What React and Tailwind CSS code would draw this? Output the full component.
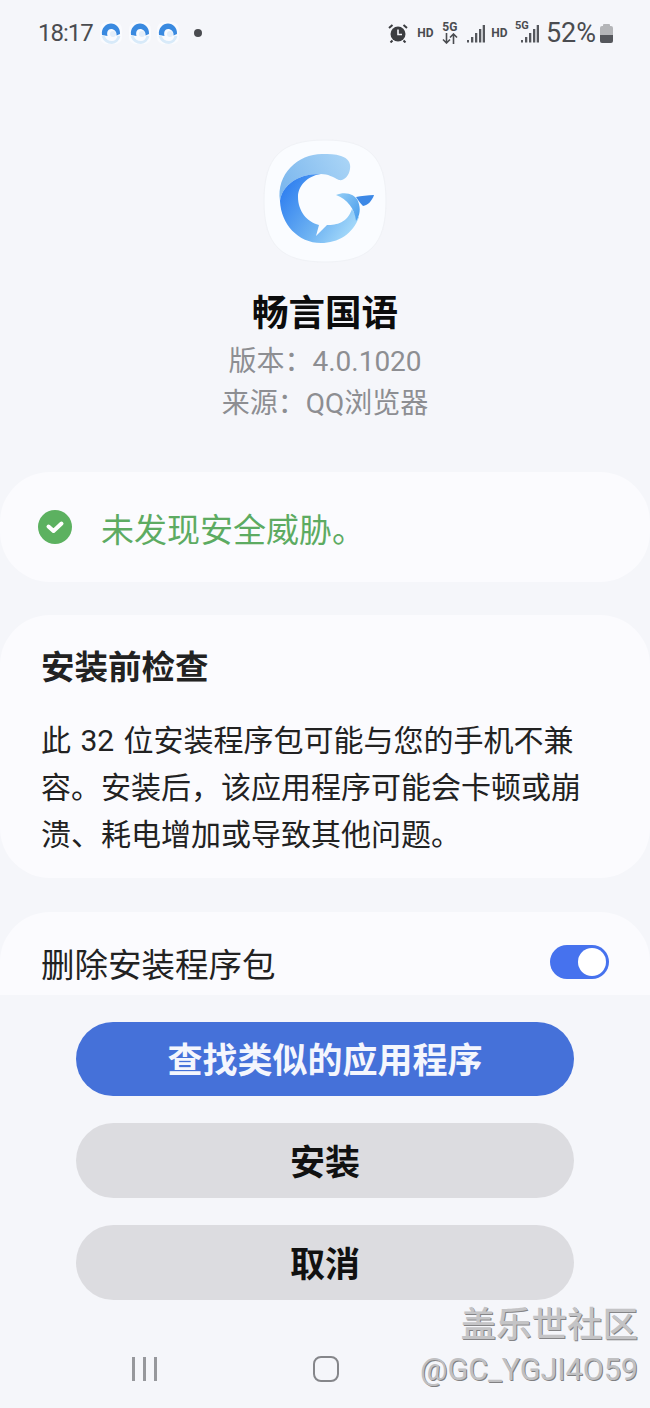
import React from 'react';

const FONT = "font-['Roboto','Noto_Sans_CJK_SC',sans-serif]";

const MiniApp = () => (
  <svg width="24" height="26" viewBox="0 0 24 26" className="shrink-0">
    <rect x="1" y="2" width="22" height="22" rx="7" fill="#fafbfe" />
    <path d="M3 15C2 8 7 3.500 12 3.500C17 3.500 21.500 8 21 14L17.500 15.500C18 11.500 15 9 12 9C9 9 7.500 12 8.500 16Z" fill="#3a8ae0" />
    <path d="M4 16C6 21 10 22.500 13 22.500C16 22.500 19 20 20 16" stroke="#d8eaf9" strokeWidth="3" fill="none" />
    <circle cx="14" cy="14" r="3" fill="#e3eefa" />
  </svg>
);

const Signal = ({ dot = true }) => (
  <svg width="18" height="18" viewBox="0 0 18 18" fill="#55575c">
    {dot && <rect x="0" y="15" width="2" height="2.500" />}
    <rect x="4" y="12" width="2.300" height="5.500" />
    <rect x="8" y="8" width="2.300" height="9.500" />
    <rect x="12" y="4" width="2.300" height="13.500" />
    <rect x="15.700" y="0" width="2.300" height="17.500" />
  </svg>
);

const StatusBar = () => (
  <div className="h-[66px] flex items-center pl-[38px] pr-[37px] text-[#4a4c50] shrink-0">
    <span className="text-[24px] w-[54px] tracking-[-1px] leading-none">18:17</span>
    <div className="flex items-center gap-[4.500px] ml-[7px]">
      <MiniApp />
      <MiniApp />
      <MiniApp />
    </div>
    <div className="w-[8px] h-[8px] rounded-full bg-[#4a4c50] ml-[14px]"></div>

    <div className="ml-auto flex items-center">
      <svg width="20" height="20" viewBox="0 0 20 20">
        <circle cx="10" cy="11" r="7.500" fill="#3b3d40" />
        <path d="M10 6.500V11.500H14" stroke="#f5f6fa" strokeWidth="1.600" fill="none" />
        <path d="M1 5l3.500-3M19 5l-3.500-3M4.500 17.500l-2 2M15.500 17.500l2 2" stroke="#3b3d40" strokeWidth="2" />
      </svg>
      <span className="text-[12px] font-bold w-[17px] text-center ml-[9px]">HD</span>
      <div className="flex flex-col items-center w-[16px] leading-none ml-[8px]">
        <span className="text-[12px] font-bold leading-[10px]">5G</span>
        <svg width="16" height="11" viewBox="0 0 16 11" fill="none" stroke="#4a4c50" strokeWidth="1.600" className="mt-[1px]">
          <path d="M4.500 0v10M1 6.500l3.500 3.500 3.500-3.500M11.500 11V1M8 4.500L11.500 1 15 4.500" />
        </svg>
      </div>
      <div className="ml-[9px] mt-[2px]">
        <Signal />
      </div>
      <span className="text-[12px] font-bold w-[17px] text-center ml-[6px]">HD</span>
      <div className="relative w-[24px] h-[22px] ml-[7px]">
        <span className="absolute left-0 -top-[2px] text-[11px] font-bold leading-[11px]">5G</span>
        <div className="absolute right-0 top-[3px]">
          <Signal />
        </div>
      </div>
      <span className="text-[27px] leading-none ml-[7px]">52%</span>
      <div className="ml-[4px] w-[13px] h-[19px] flex flex-col items-center">
        <div className="w-[7px] h-[2px] bg-[#b4b5b8] rounded-t-[1px]"></div>
        <div className="w-[13px] h-[17px] rounded-[2px] overflow-hidden flex flex-col">
          <div className="h-[9px] bg-[#b4b5b8]"></div>
          <div className="flex-1 bg-[#55575c]"></div>
        </div>
      </div>
    </div>
  </div>
);

const AppLogo = () => (
  <svg width="124" height="124" viewBox="0 0 124 124">
    <defs>
      <linearGradient id="band" x1="0" y1="0.6" x2="1" y2="0.2">
        <stop offset="0" stopColor="#7db8ee" />
        <stop offset="1" stopColor="#a9d4f6" />
      </linearGradient>
      <linearGradient id="crescent" x1="0" y1="0.25" x2="1" y2="0.85">
        <stop offset="0" stopColor="#2f7ff0" />
        <stop offset="0.55" stopColor="#6db2f2" />
        <stop offset="1" stopColor="#aee0fb" />
      </linearGradient>
      <linearGradient id="fish" x1="0" y1="0" x2="1" y2="0.8">
        <stop offset="0" stopColor="#96cff6" />
        <stop offset="1" stopColor="#4d9fec" />
      </linearGradient>
    </defs>
    <path
      d="M62 1C106 1 123 18 123 62C123 106 106 123 62 123C18 123 1 106 1 62C1 18 18 1 62 1Z"
      fill="#fafcff"
      stroke="#f0f2f6"
    />
    <path
      d="M17 62C13 35 35 15 59 15C66 15 72 15 78 17C85 19 88 24 87 30C86 37 81 42 76 41C70 38 65 35 58 35C36 34 19 46 17 62Z"
      fill="url(#band)"
    />
    <path
      d="M17 62C19 46 36 34 58 35C44 37 35 47 35 58C35 72 44 83 56 86L53 97L64 86C74 86 84 84 89 70C91 74 94 78 96 78C90 95 75 104 58 104C35 104 18 85 17 62Z"
      fill="url(#crescent)"
    />
    <path d="M73 56C82 52 92 55 95 62C98 70 97 76 93 82C92 70 84 60 73 56Z" fill="url(#fish)" />
    <path d="M93 58C98 57 105 56 111 56C109 62 105 66 100 67C97 64 95 61 93 58Z" fill="#3c88e6" />
  </svg>
);

const ActionButton = ({ children, primary }) => (
  <button
    className={
      primary
        ? 'h-[74px] w-full rounded-full bg-[#4571d9] text-[#f4f6fd] text-[35px] font-bold pt-[7px]'
        : 'h-[75px] w-full rounded-full bg-[#dcdce0] text-[#111] text-[35px] font-bold pt-[8px]'
    }
  >
    {children}
  </button>
);

const App = () => {
  return (
    <div className={`${FONT} relative h-[1408px] overflow-hidden bg-[#f5f6fa] flex flex-col`}>
      <div className="h-[995px] overflow-hidden shrink-0">
        <StatusBar />

        <div className="flex flex-col items-center pt-[73px]">
          <AppLogo />
          <div className="mt-[26px] text-[36.500px] font-bold leading-[50px] text-[#0c0c0c]">畅言国语</div>
          <div className="mt-[2px] text-[28px] leading-[42px] text-[#8d8e92]">版本：4.0.1020</div>
          <div className="text-[28px] leading-[42px] text-[#8d8e92]">来源：QQ浏览器</div>
        </div>

        <div className="mt-[47px] h-[110px] rounded-[50px] bg-[#fbfbfe] flex items-center pl-[38px]">
          <svg width="34" height="34" viewBox="0 0 34 34">
            <circle cx="17" cy="17" r="17" fill="#5cb160" />
            <path d="M10.500 16.500L15.500 21L23.500 13.500" stroke="#fff" strokeWidth="4" fill="none" strokeLinecap="round" strokeLinejoin="round" />
          </svg>
          <span className="ml-[29px] text-[33px] text-[#5dab62] pt-[7px]">未发现安全威胁。</span>
        </div>

        <div className="mt-[33px] h-[263px] rounded-[50px] bg-[#fbfbfe] pl-[41px] pr-[42px] pt-[31px]">
          <div className="text-[33.500px] font-bold leading-[44px] text-[#222]">安装前检查</div>
          <div className="mt-[27px] text-[30px] leading-[47px] text-[#222] [word-spacing:2px]">
            此 32 位安装程序包可能与您的手机不兼容。安装后，该应用程序可能会卡顿或崩溃、耗电增加或导致其他问题。
          </div>
        </div>

        <div className="mt-[34px] h-[140px] rounded-[50px] bg-[#fbfbfe] pl-[41px] pr-[41px] pt-[33px] flex justify-between items-start">
          <span className="text-[33.500px] leading-[42px] text-[#222]">删除安装程序包</span>
          <div className="w-[59px] h-[34px] rounded-full bg-[#4672ee] flex items-center justify-end pr-[3px]">
            <div className="w-[28px] h-[28px] rounded-full bg-white"></div>
          </div>
        </div>
      </div>

      <div className="flex-1 bg-[#f5f6fa] flex flex-col">
        <div className="px-[76px] pt-[27px] flex flex-col gap-[27px]">
          <ActionButton primary>查找类似的应用程序</ActionButton>
          <ActionButton>安装</ActionButton>
          <ActionButton>取消</ActionButton>
        </div>

        <div className="mt-[56px] flex items-center">
          <div className="ml-[132px] w-[25px] h-[24px] flex justify-between">
            <div className="w-[3px] h-full bg-[#97989c]"></div>
            <div className="w-[3px] h-full bg-[#97989c]"></div>
            <div className="w-[3px] h-full bg-[#97989c]"></div>
          </div>
          <div className="ml-[156px] w-[26px] h-[26px] rounded-[8px] border-2 border-[#85868a]"></div>
        </div>
      </div>

      {/* watermark sits on top of the page */}
      <div className="absolute right-[12px] top-[1304px] flex flex-col items-end">
        <span className="text-[35.500px] font-medium leading-[42px] text-[#c4c4c6] [text-shadow:1px_1px_0_#858587]">盖乐世社区</span>
        <span className="text-[30.500px] leading-[36px] mt-[6px] text-[#c0c0c2] [text-shadow:1px_1px_0_#808082]">@GC_YGJI4O59</span>
      </div>
    </div>
  );
};

export default App;
